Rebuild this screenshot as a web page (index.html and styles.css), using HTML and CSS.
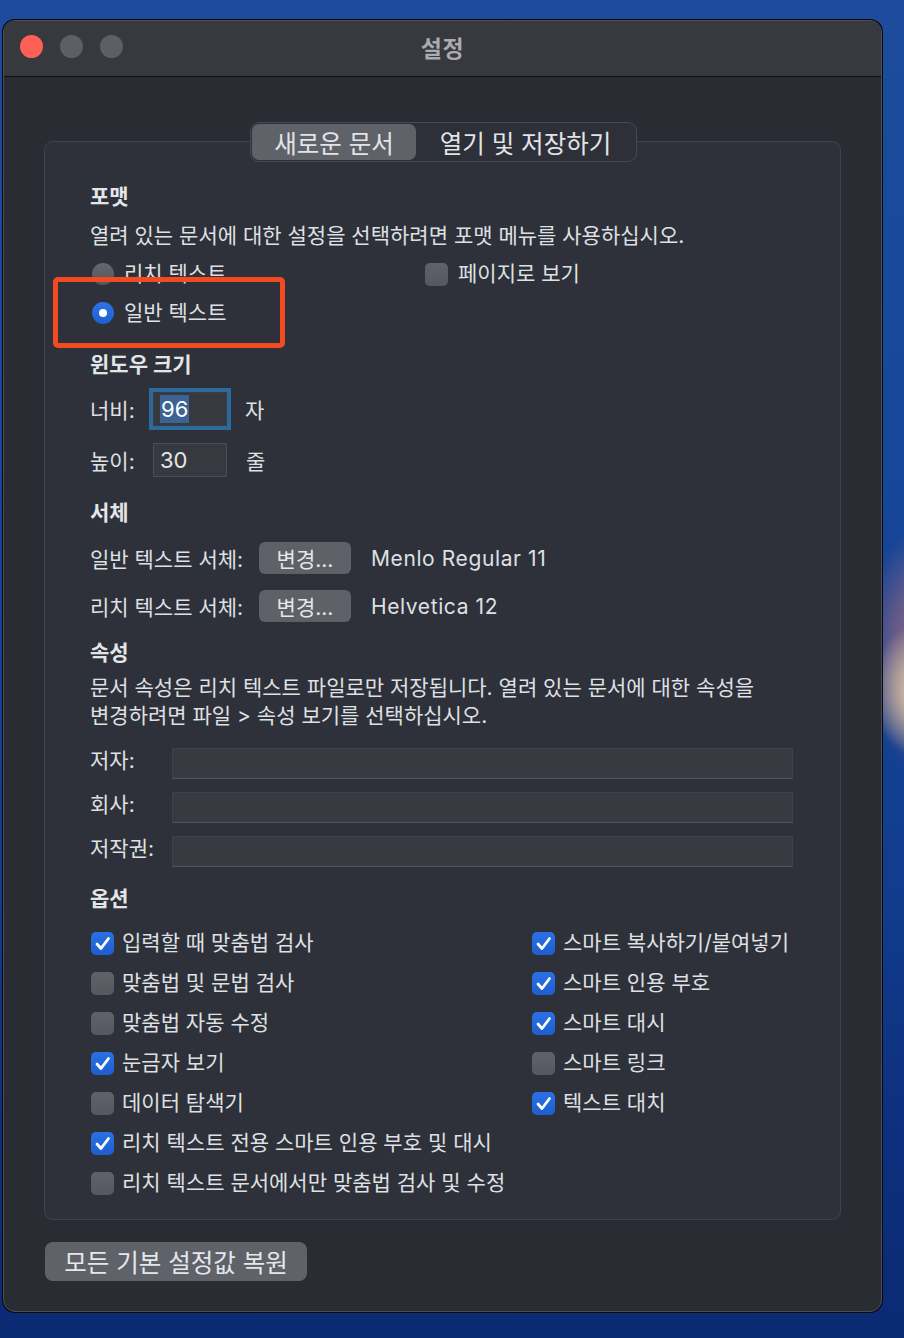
FILE: index.html
```html
<!DOCTYPE html>
<html lang="ko">
<head>
<meta charset="utf-8">
<title>설정</title>
<link rel="stylesheet" href="styles.css">
</head>
<body>
<div class="desktop">
  <div class="window">
    <div class="titlebar">
      <div class="lights">
        <span class="light red"></span>
        <span class="light"></span>
        <span class="light"></span>
      </div>
      <div class="title">설정</div>
      <div></div>
    </div>
    <div class="content">
      <div class="tabs">
        <div class="tab active">새로운 문서</div>
        <div class="tab">열기 및 저장하기</div>
      </div>
      <div class="group">
        <div class="heading">포맷</div>
        <div class="line desc1">열려 있는 문서에 대한 설정을 선택하려면 포맷 메뉴를 사용하십시오.</div>
        <div class="format-grid">
          <div class="opt"><span class="radio"></span>리치 텍스트</div>
          <div class="opt"><span class="box"></span>페이지로 보기</div>
          <div class="opt"><span class="radio on"></span>일반 텍스트</div>
        </div>

        <div class="heading h-window">윈도우 크기</div>
        <div class="sizerow first">
          <span class="sizelabel">너비:</span>
          <span class="field focused"><span class="sel">96</span></span>
          <span class="unit">자</span>
        </div>
        <div class="sizerow second">
          <span class="sizelabel">높이:</span>
          <span class="field">30</span>
          <span class="unit">줄</span>
        </div>

        <div class="heading h-font">서체</div>
        <div class="fontrow first">
          <span class="fontlabel">일반 텍스트 서체:</span>
          <span class="btn">변경...</span>
          <span class="fontname">Menlo Regular 11</span>
        </div>
        <div class="fontrow second">
          <span class="fontlabel">리치 텍스트 서체:</span>
          <span class="btn">변경...</span>
          <span class="fontname">Helvetica 12</span>
        </div>

        <div class="heading h-props">속성</div>
        <div class="desc2">문서 속성은 리치 텍스트 파일로만 저장됩니다. 열려 있는 문서에 대한 속성을<br>변경하려면 파일 &gt; 속성 보기를 선택하십시오.</div>
        <div class="proprow first"><span class="proplabel">저자:</span><span class="propfield"></span></div>
        <div class="proprow"><span class="proplabel">회사:</span><span class="propfield"></span></div>
        <div class="proprow"><span class="proplabel">저작권:</span><span class="propfield"></span></div>

        <div class="heading h-opts">옵션</div>
        <div class="cols">
          <div class="col left">
            <div class="opt"><span class="box on"><svg viewBox="0 0 23 23"><polyline points="6,12 10,16.5 17.5,6.5"/></svg></span>입력할 때 맞춤법 검사</div>
            <div class="opt"><span class="box"></span>맞춤법 및 문법 검사</div>
            <div class="opt"><span class="box"></span>맞춤법 자동 수정</div>
            <div class="opt"><span class="box on"><svg viewBox="0 0 23 23"><polyline points="6,12 10,16.5 17.5,6.5"/></svg></span>눈금자 보기</div>
            <div class="opt"><span class="box"></span>데이터 탐색기</div>
            <div class="opt"><span class="box on"><svg viewBox="0 0 23 23"><polyline points="6,12 10,16.5 17.5,6.5"/></svg></span>리치 텍스트 전용 스마트 인용 부호 및 대시</div>
            <div class="opt"><span class="box"></span>리치 텍스트 문서에서만 맞춤법 검사 및 수정</div>
          </div>
          <div class="col right">
            <div class="opt"><span class="box on"><svg viewBox="0 0 23 23"><polyline points="6,12 10,16.5 17.5,6.5"/></svg></span>스마트 복사하기/붙여넣기</div>
            <div class="opt"><span class="box on"><svg viewBox="0 0 23 23"><polyline points="6,12 10,16.5 17.5,6.5"/></svg></span>스마트 인용 부호</div>
            <div class="opt"><span class="box on"><svg viewBox="0 0 23 23"><polyline points="6,12 10,16.5 17.5,6.5"/></svg></span>스마트 대시</div>
            <div class="opt"><span class="box"></span>스마트 링크</div>
            <div class="opt"><span class="box on"><svg viewBox="0 0 23 23"><polyline points="6,12 10,16.5 17.5,6.5"/></svg></span>텍스트 대치</div>
          </div>
        </div>

        <div class="highlight"></div>
      </div>
      <div class="reset">모든 기본 설정값 복원</div>
    </div>
  </div>
</div>
</body>
</html>
```

FILE: styles.css
```css
* { box-sizing: border-box; margin: 0; padding: 0; }
html, body { width: 904px; height: 1338px; overflow: hidden; }
body {
  font-family: Inter, "Noto Sans CJK KR", sans-serif;
  font-size: 21px;
  color: #dfe0e3;
  background:
    radial-gradient(ellipse 60px 70px at 930px 690px, #d8ccb8 0%, #bfae9e 45%, rgba(150,130,140,0) 100%),
    radial-gradient(ellipse 80px 130px at 940px 650px, #8a7587 0%, #6b5c86 55%, rgba(60,70,140,0) 100%),
    linear-gradient(180deg, #1c4c9b 0%, #17479a 35%, #123d8e 65%, #0d2f7d 85%, #0b2a74 100%);
}
.desktop { padding: 20px 0 0 3px; }

.window {
  width: 879px;
  height: 1292px;
  border: 1px solid #4b4e55;
  border-radius: 12px;
  box-shadow: 0 0 0 1px #07080b;
  background: #292c33;
  overflow: hidden;
}

.titlebar {
  height: 56px;
  padding-bottom: 4px;
  background: #37393f;
  border-bottom: 1px solid #101114;
  display: grid;
  grid-template-columns: 1fr auto 1fr;
  align-items: center;
}
.lights { display: flex; gap: 17px; padding-left: 16px; }
.light { width: 23px; height: 23px; border-radius: 50%; background: #5d5f64; }
.light.red { background: #fe5f57; }
.title { font-size: 23px; font-weight: 700; color: #a9abb1; letter-spacing: 0.5px; }

.content { padding-top: 45px; }

.tabs {
  position: relative;
  z-index: 1;
  width: 387px;
  height: 40px;
  margin: 0 auto;
  transform: translateX(1px);
  display: flex;
  padding: 1px;
  border: 1px solid #464951;
  border-radius: 9px;
  background: #2d3038;
}
.tab {
  font-size: 24.5px;
  color: #e3e4e7;
  display: flex;
  align-items: center;
  justify-content: center;
  border-radius: 7px;
}
.tab.active { width: 164px; background: #5f6269; }
.tab:not(.active) { flex: 1; }

.group {
  position: relative;
  margin: -21px 40px 0 40px;
  height: 1079px;
  border: 1px solid #41444c;
  border-radius: 9px;
  background: #2e3139;
  padding: 41px 40px 0 45px;
}

.heading { height: 28px; line-height: 28px; font-weight: 700; color: #e4e5e8; }
.line { height: 28px; line-height: 28px; }
.desc1 { margin-top: 11px; }

.opt { display: flex; align-items: center; height: 28px; line-height: 28px; white-space: nowrap; }

.format-grid {
  margin-top: 10px;
  display: grid;
  grid-template-columns: 335px 1fr;
  row-gap: 11px;
}
.format-grid .opt { gap: 10px; }

.radio {
  width: 22px; height: 22px; border-radius: 50%;
  margin-left: 2px;
  background: linear-gradient(180deg, #64666c, #55585e);
  flex: none;
  position: relative;
}
.radio.on { background: linear-gradient(180deg, #2d74e6, #1e5fd2); }
.radio.on::after {
  content: ""; position: absolute; left: 7px; top: 7px;
  width: 8px; height: 8px; border-radius: 50%; background: #fff;
}

.box {
  width: 23px; height: 23px; border-radius: 5px; flex: none;
  background: linear-gradient(180deg, #606269, #55585e);
  display: flex; align-items: center; justify-content: center;
}
.box.on { background: linear-gradient(180deg, #2b71e4, #1d5ed1); }
.box svg { width: 23px; height: 23px; }
.box polyline { fill: none; stroke: #fff; stroke-width: 2.8; stroke-linecap: round; stroke-linejoin: round; }

.h-window { margin-top: 24px; }
.sizerow { display: flex; align-items: center; }
.sizerow.first { height: 42px; margin-top: 9px; }
.sizerow.second { height: 34px; margin-top: 13px; }
.sizelabel { width: 63px; }
.field {
  width: 74px; height: 34px;
  background: #363940;
  border: 1px solid #4a4d54;
  display: flex; align-items: center;
  padding-left: 6px;
  font-size: 22px;
  color: #e6e7ea;
}
.field.focused { box-shadow: 0 0 0 4px #2b6a9b; border-color: #3a3d44; }
.sel { background: #3c6394; color: #ffffff; padding: 0 1px; line-height: 28px; }
.unit { margin-left: 18px; }
.sizerow.second .unit { margin-left: 19px; }

.h-font { margin-top: 22px; }
.fontrow { display: flex; align-items: center; height: 32px; }
.fontrow.first { margin-top: 15px; }
.fontrow.second { margin-top: 16px; }
.fontlabel { width: 169px; }
.btn {
  width: 92px; height: 32px; border-radius: 6px;
  background: #5e6168;
  display: flex; align-items: center; justify-content: center;
  color: #e6e7ea;
}
.fontname { margin-left: 20px; letter-spacing: 0.6px; }

.h-props { margin-top: 17px; }
.desc2 { margin-top: 7px; line-height: 28px; }
.proprow { display: flex; height: 31px; margin-top: 13px; }
.proprow.first { margin-top: 18px; }
.proplabel { width: 82px; line-height: 25px; }
.propfield {
  width: 621px; height: 31px;
  background: #373a41;
  border: 1px solid #3f424a;
  border-bottom-color: #50535a;
}

.h-opts { margin-top: 18px; }
.cols { display: flex; margin-top: 16px; }
.col { display: flex; flex-direction: column; gap: 12px; }
.col.left { width: 442px; }
.col .opt { gap: 8px; }
.col.left .box { margin-left: 1px; }

.highlight {
  position: absolute;
  left: 8px; top: 135px;
  width: 232px; height: 71px;
  border: 5px solid #f24b22;
  border-radius: 5px;
}

.reset {
  margin: 22px 0 0 41px;
  width: 262px; height: 39px;
  border-radius: 8px;
  background: #5f6269;
  font-size: 24.5px;
  color: #e6e7ea;
  display: flex; align-items: center; justify-content: center;
}
```
